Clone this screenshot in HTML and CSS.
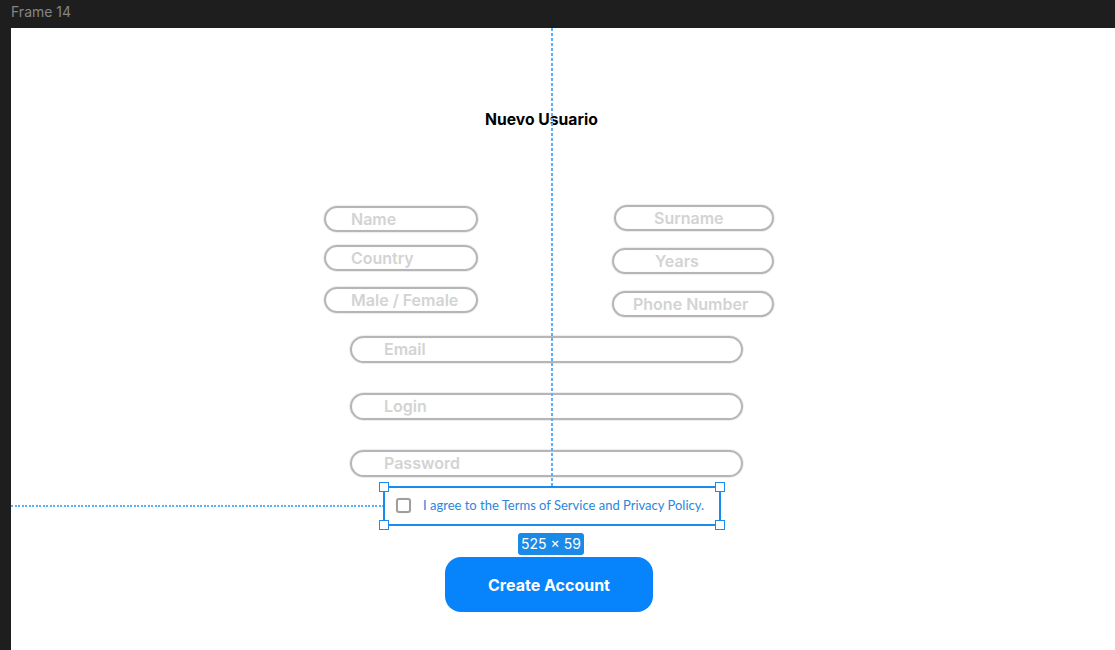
FILE: index.html
```html
<!DOCTYPE html>
<html lang="es">
<head>
<meta charset="utf-8">
<title>Frame 14</title>
<link rel="stylesheet" href="styles.css">
</head>
<body>
<div class="topbar"><span class="frame-label">Frame 14</span></div>
<div class="frame">
  <div class="guide guide-v"></div>
  <div class="guide guide-h"></div>
  <h1 class="title">Nuevo Usuario</h1>
  <div class="cols">
    <div class="col col-left">
      <div class="field f-left">Name</div>
      <div class="field f-left">Country</div>
      <div class="field f-left">Male / Female</div>
    </div>
    <div class="col col-right">
      <div class="field f-surname">Surname</div>
      <div class="field f-years">Years</div>
      <div class="field f-phone">Phone Number</div>
    </div>
  </div>
  <div class="wide-list">
    <div class="field f-wide">Email</div>
    <div class="field f-wide">Login</div>
    <div class="field f-wide">Password</div>
  </div>
  <div class="selection">
    <span class="handle h-tl"></span><span class="handle h-tr"></span>
    <span class="handle h-bl"></span><span class="handle h-br"></span>
    <span class="checkbox"></span>
    <span class="agree">I agree to the Terms of Service and Privacy Policy.</span>
  </div>
  <div class="badge">525 × 59</div>
  <button class="create">Create Account</button>
</div>
</body>
</html>
```
FILE: styles.css
```css
* { box-sizing: border-box; }
html, body { margin: 0; padding: 0; }
body {
  background: #1e1e1e;
  font-family: Inter, "Noto Sans", sans-serif;
  width: 1115px;
  height: 650px;
  overflow: hidden;
}
.topbar {
  height: 28px;
  padding-left: 11px;
  padding-top: 1px;
}
.frame-label {
  font-size: 14px;
  line-height: 20px;
  color: #858585;
}
.frame {
  position: relative;
  margin-left: 11px;
  height: 622px;
  background: #ffffff;
  padding-top: 82px;
}
.title {
  margin: 0 0 0 474px;
  font-size: 15.7px;
  line-height: 20px;
  font-weight: 700;
  color: #000;
}
.cols {
  display: flex;
  margin: 75px 0 0 313px;
}
.col { display: flex; flex-direction: column; }
.col-left { width: 154px; padding-top: 1px; }
.col-left .field:nth-child(2) { margin-top: 13px; }
.col-left .field:nth-child(3) { margin-top: 16px; }
.col-right { width: 162px; margin-left: 134px; gap: 17px; }
.field {
  height: 26px;
  border: 2px solid #b6b6b6;
  border-radius: 14px;
  box-shadow: 0 0 1px 0.5px rgba(0,0,0,0.14), inset 0 0 1px rgba(0,0,0,0.14);
  font-size: 16px;
  font-weight: 600;
  color: #d3d3d3;
  line-height: 22px;
  white-space: nowrap;
}
.f-left { padding-left: 25px; }
.f-surname { margin-left: 2px; padding-left: 38px; }
.f-years { padding-left: 41px; }
.f-phone { padding-left: 19px; }
.wide-list {
  display: flex;
  flex-direction: column;
  gap: 30px;
  margin: 19px 0 0 339px;
  width: 393px;
}
.f-wide { height: 27px; padding-left: 32px; line-height: 23px; }
.selection {
  position: relative;
  display: flex;
  align-items: center;
  margin: 9px 0 0 372px;
  width: 338px;
  height: 40px;
  border: 2px solid #1a8cf0;
  padding-left: 11px;
  padding-bottom: 2px;
}
.handle {
  position: absolute;
  width: 10px;
  height: 10px;
  background: #fff;
  border: 1.5px solid #1a8cf0;
}
.h-tl { left: -6px; top: -6px; }
.h-tr { right: -6px; top: -6px; }
.h-bl { left: -6px; bottom: -6px; }
.h-br { right: -6px; bottom: -6px; }
.checkbox {
  width: 15px;
  height: 15px;
  border: 2px solid #9e9e9e;
  border-radius: 3px;
  box-shadow: 0 0 1px rgba(0,0,0,0.2);
}
.agree {
  margin-left: 12px;
  font-family: Lato, "Open Sans", sans-serif;
  font-size: 13px;
  color: #2a86dc;
  white-space: nowrap;
}
.badge {
  margin: 7px 0 0 507px;
  width: 66px;
  height: 22px;
  background: #1a8ae8;
  border-radius: 3px;
  color: #fff;
  font-size: 14px;
  line-height: 22px;
  text-align: center;
}
.create {
  display: block;
  margin: 2px 0 0 434px;
  width: 208px;
  height: 55px;
  border: 0;
  border-radius: 16px;
  background: #0784fb;
  color: #fff;
  font-family: Inter, "Noto Sans", sans-serif;
  font-size: 16px;
  font-weight: 700;
  padding: 0;
}
.guide { position: absolute; }
.guide-v {
  left: 540px;
  top: 0;
  width: 2px;
  height: 458px;
  background: repeating-linear-gradient(to bottom, #58b0ff 0 3px, transparent 3px 5px);
}
.guide-h {
  left: 0;
  top: 477px;
  width: 372px;
  height: 1.5px;
  background: repeating-linear-gradient(to right, #58b0ff 0 2px, transparent 2px 3.5px);
}
```
